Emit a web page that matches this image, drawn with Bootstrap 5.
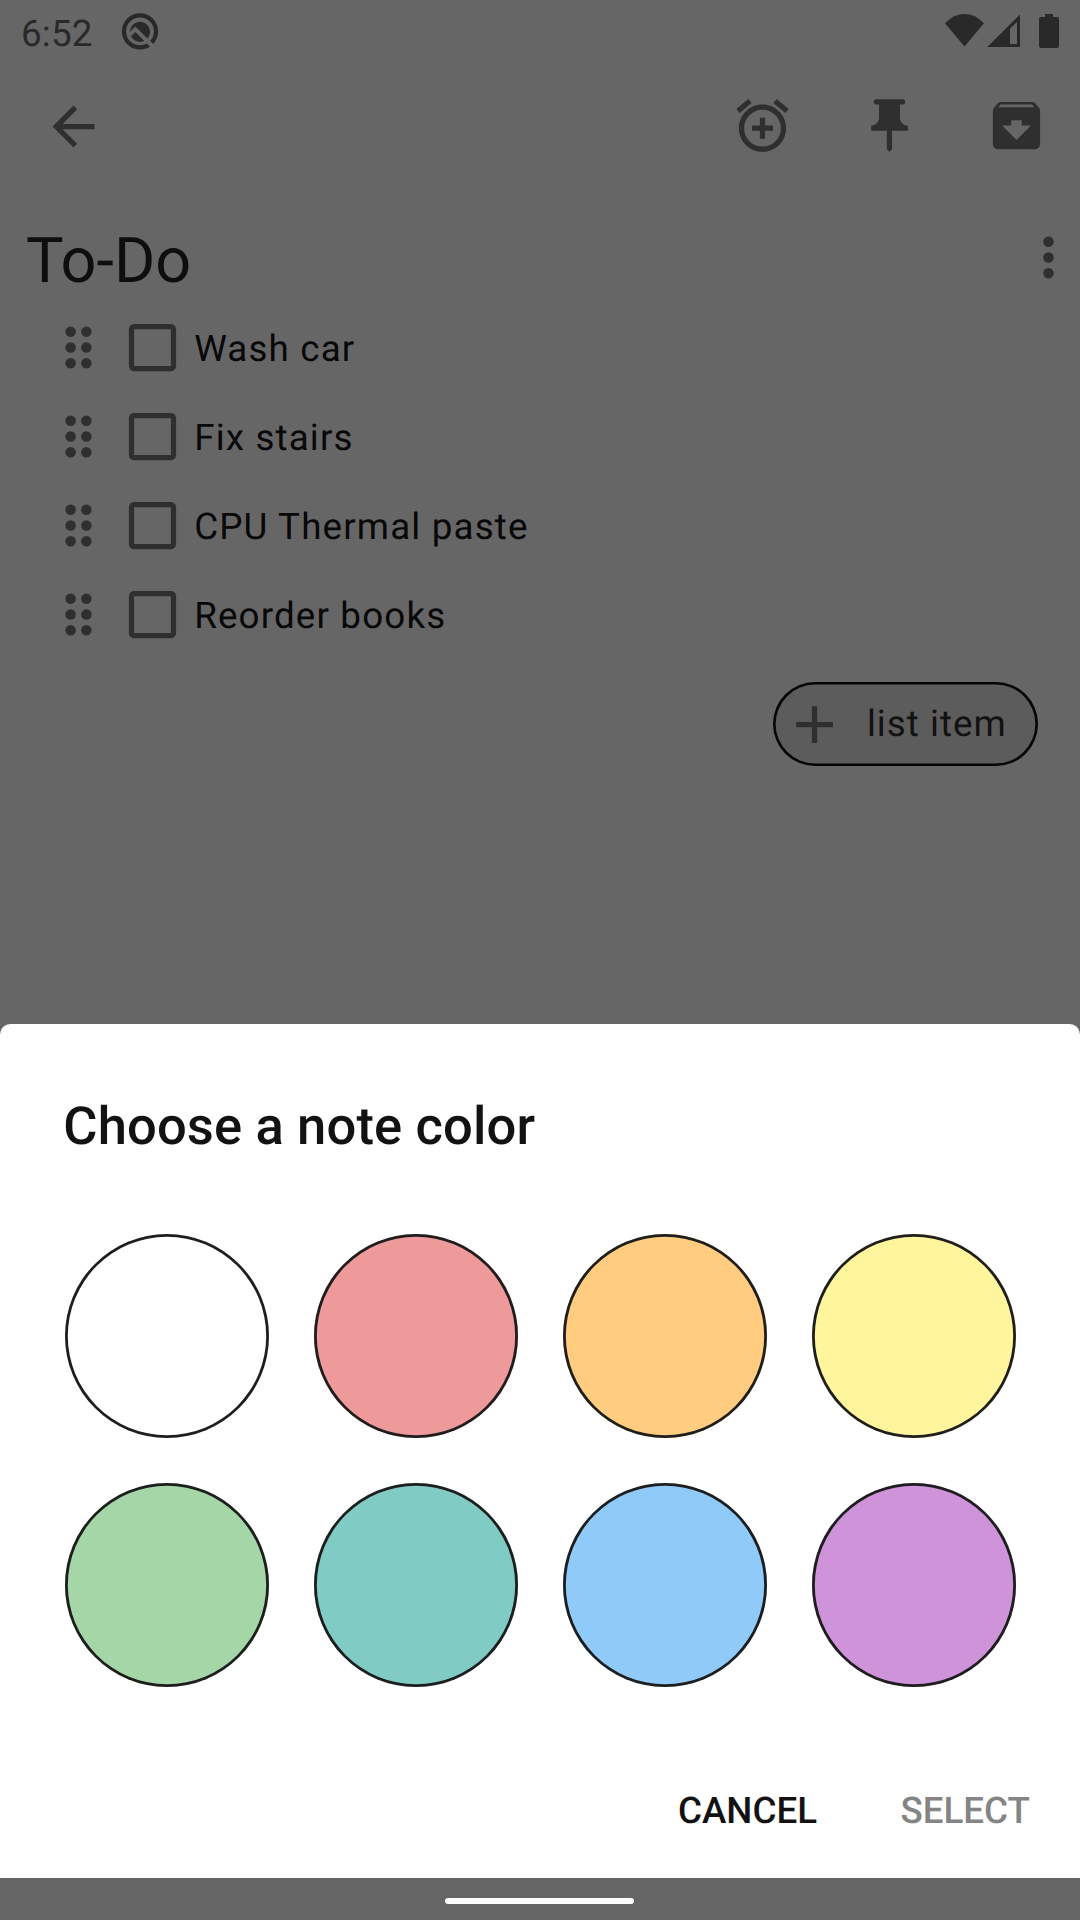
<!DOCTYPE html>
<html lang="en">
<head>
<meta charset="utf-8">
<meta name="viewport" content="width=device-width, initial-scale=1">
<title>To-Do</title>
<link href="https://cdn.jsdelivr.net/npm/bootstrap@5.3.0/dist/css/bootstrap.min.css" rel="stylesheet">
<style>
  body { font-family: Roboto, sans-serif; font-size: 36.75px; line-height: 1; background: #666; color: #080808; text-rendering: geometricPrecision; }
  .screen { width: 1080px; height: 1920px; }
  .ico { width: 63px; height: 63px; fill: #2f2f2f; display: block; flex: none; }
  .status { height: 63px; padding-left: 21px; color: #292929; }
  .status svg { fill: #292929; display: block; }
  .clock { width: 99px; line-height: 67px; letter-spacing: .2px; }
  .toolbar { height: 126px; padding: 31px 32px 0 42px; }
  .back { margin-top: 1px; }
  .actions { gap: 64px; }
  .note-head { height: 113px; padding: 37px 0 0 26px; }
  .note-title { font-size: 63px; line-height: 63px; color: #0e0e0e; padding-top: 4px; }
  .note-row { height: 89px; padding: 1px 0 0 46.7px; letter-spacing: 1.15px; }
  .note-row .box { margin-left: 11px; }
  .note-row span { margin-left: 10.5px; padding-top: 4px; }
  .chip-row { padding: 24px 42px 0 0; }
  .chip { width: 265px; height: 84px; box-shadow: inset 0 0 0 2.6px #050505; border-radius: 42px; background: #5c5c5c; color: #121212; padding-left: 10.4px; letter-spacing: 1.02px; }
  .chip span { margin-left: 20.5px; }
  .sheet { height: 854px; border-radius: 10.5px 10.5px 0 0; padding: 72px 64px 0 64.8px; color: #121212; }
  .sheet-title { font-size: 52.5px; line-height: 60px; margin-left: -1.6px; letter-spacing: .15px; }
  .palette { display: grid; grid-template-columns: repeat(4, 204px); gap: 45px; margin-top: 77.6px; }
  .swatch { height: 204px; box-shadow: inset 0 0 0 2.8px #1e1e1e; }
  .sheet-actions { gap: 83.5px; margin: 104.5px -14px 0 0; line-height: 40px; }
  .sheet-title, .sheet-actions { font-weight: 500; }
  .disabled-action { color: #848484; }
  .navbar-gesture { height: 42px; padding: 4px 1px 0 0; }
  .handle { width: 189px; height: 6px; }
</style>
</head>
<body>
<div class="screen d-flex flex-column overflow-hidden">
  <header class="status d-flex align-items-start">
    <div class="clock">6:52</div>
    <svg width="40" height="63" viewBox="120 0 40 63"><circle cx="140" cy="31.4" r="16" fill="none" stroke="#292929" stroke-width="4.2"/><circle cx="140" cy="31.8" r="10.1"/><path d="M129 35.4L135.3 29.2L154.3 48" fill="none" stroke="#666" stroke-width="4"/></svg>
    <svg class="ms-auto" width="135" height="63" viewBox="945 0 135 63"><path d="M945 23.3Q954 14 964.5 14T984 23.3L964.5 46.5Z"/><path fill-rule="evenodd" d="M987.3 47L1020 14.5V47ZM1010 28.5V44H1017V22Z"/><path d="M1045 14h8v3h4q2 0 2 2v27q0 2-2 2h-16q-2 0-2-2V19q0-2 2-2h4Z"/></svg>
  </header>
  <nav class="toolbar d-flex justify-content-between align-items-start">
    <svg class="ico back" viewBox="0 0 24 24"><path d="M20 11H7.83l5.59-5.59L12 4l-8 8 8 8 1.41-1.41L7.83 13H20v-2z"/></svg>
    <div class="actions d-flex">
      <svg class="ico" viewBox="0 0 24 24"><path d="M7.88 3.39L6.6 1.86 2 5.71l1.29 1.53 4.59-3.85zM22 5.72l-4.6-3.86-1.29 1.53 4.6 3.86L22 5.72zM12 4c-4.97 0-9 4.03-9 9s4.02 9 9 9c4.97 0 9-4.03 9-9s-4.03-9-9-9zm0 16c-3.87 0-7-3.13-7-7s3.13-7 7-7 7 3.13 7 7-3.13 7-7 7zm1-11h-2v3H8v2h3v3h2v-3h3v-2h-3V9z"/></svg>
      <svg class="ico" viewBox="0 0 24 24"><path d="M16 9V4h1c.55 0 1-.45 1-1s-.45-1-1-1H7c-.55 0-1 .45-1 1s.45 1 1 1h1v5c0 1.66-1.34 3-3 3v2h5.97v7l1 1 1-1v-7H19v-2c-1.66 0-3-1.34-3-3z"/></svg>
      <svg class="ico" viewBox="0 0 24 24"><path fill-rule="evenodd" d="M20.54 5.23l-1.39-1.68C18.88 3.21 18.47 3 18 3H6c-.47 0-.88.21-1.16.55L3.46 5.23C3.17 5.57 3 6.02 3 6.5V19c0 1.1.9 2 2 2h14c1.1 0 2-.9 2-2V6.5c0-.48-.17-.93-.46-1.27zM12 17.5L6.5 12H10v-2h4v2h3.5L12 17.5zM5.12 5l.81-1h12l.94 1H5.12z"/></svg>
    </div>
  </nav>
  <main class="flex-grow-1">
    <div class="note-head d-flex justify-content-between align-items-start">
      <h1 class="note-title fw-normal mb-0">To-Do</h1>
      <svg class="ico" viewBox="0 0 24 24"><circle cx="12" cy="6" r="2"/><circle cx="12" cy="12" r="2"/><circle cx="12" cy="18" r="2"/></svg>
    </div>
    <svg width="0" height="0" class="d-none"><defs>
      <g id="drag"><circle cx="9" cy="6" r="2"/><circle cx="15" cy="6" r="2"/><circle cx="9" cy="12" r="2"/><circle cx="15" cy="12" r="2"/><circle cx="9" cy="18" r="2"/><circle cx="15" cy="18" r="2"/></g>
      <path id="unchecked" d="M19 5v14H5V5h14m0-2H5c-1.1 0-2 .9-2 2v14c0 1.1.9 2 2 2h14c1.1 0 2-.9 2-2V5c0-1.1-.9-2-2-2z"/>
    </defs></svg>
    <div class="note-row d-flex align-items-center"><svg class="ico" viewBox="0 0 24 24"><use href="#drag"/></svg><svg class="ico box" viewBox="0 0 24 24"><use href="#unchecked"/></svg><span>Wash car</span></div>
    <div class="note-row d-flex align-items-center"><svg class="ico" viewBox="0 0 24 24"><use href="#drag"/></svg><svg class="ico box" viewBox="0 0 24 24"><use href="#unchecked"/></svg><span>Fix stairs</span></div>
    <div class="note-row d-flex align-items-center"><svg class="ico" viewBox="0 0 24 24"><use href="#drag"/></svg><svg class="ico box" viewBox="0 0 24 24"><use href="#unchecked"/></svg><span>CPU Thermal paste</span></div>
    <div class="note-row d-flex align-items-center"><svg class="ico" viewBox="0 0 24 24"><use href="#drag"/></svg><svg class="ico box" viewBox="0 0 24 24"><use href="#unchecked"/></svg><span>Reorder books</span></div>
    <div class="chip-row d-flex justify-content-end">
      <div class="chip d-flex align-items-center text-nowrap"><svg class="ico" viewBox="0 0 24 24"><path d="M19 13h-6v6h-2v-6H5v-2h6V5h2v6h6v2z"/></svg><span>list item</span></div>
    </div>
  </main>
  <section class="sheet bg-white flex-shrink-0">
    <h2 class="sheet-title mb-0">Choose a note color</h2>
    <div class="palette">
      <div class="swatch rounded-circle" style="background:#ffffff"></div>
      <div class="swatch rounded-circle" style="background:#ef9a9a"></div>
      <div class="swatch rounded-circle" style="background:#ffcc80"></div>
      <div class="swatch rounded-circle" style="background:#fff59d"></div>
      <div class="swatch rounded-circle" style="background:#a5d6a7"></div>
      <div class="swatch rounded-circle" style="background:#80cbc4"></div>
      <div class="swatch rounded-circle" style="background:#90caf9"></div>
      <div class="swatch rounded-circle" style="background:#ce93d8"></div>
    </div>
    <div class="sheet-actions d-flex justify-content-end"><span>CANCEL</span><span class="disabled-action">SELECT</span></div>
  </section>
  <footer class="navbar-gesture d-flex justify-content-center align-items-center flex-shrink-0"><div class="handle bg-white rounded-pill"></div></footer>
</div>
<script src="https://cdn.jsdelivr.net/npm/bootstrap@5.3.0/dist/js/bootstrap.bundle.min.js"></script>
</body>
</html>
